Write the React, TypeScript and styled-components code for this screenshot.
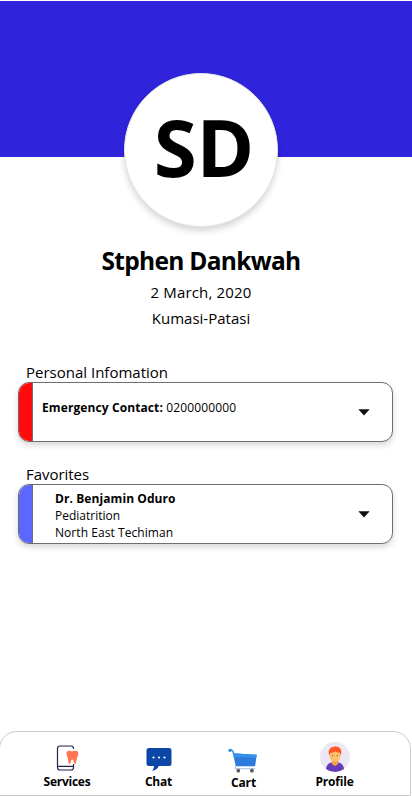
import React from "react";
import styled, { createGlobalStyle } from "styled-components";

const GlobalStyle = createGlobalStyle`
  * { box-sizing: border-box; }
  body {
    margin: 0;
    background: #fff;
    color: #000;
    font-family: "Open Sans", "Noto Sans", sans-serif;
    font-weight: 400;
    overflow: hidden;
  }
`;

const Screen = styled.div`
  width: 412px;
  height: 796px;
  display: flex;
  flex-direction: column;
  padding-top: 1px;
  overflow: hidden;
`;

const Banner = styled.header`
  height: 156px;
  flex: none;
  background: #2f24db;
  padding: 72px 0 0 124px;
`;

const Avatar = styled.div`
  width: 154px;
  height: 154px;
  border-radius: 50%;
  border: 1px solid #e6e6e6;
  background: #fff;
  box-shadow: 0 4px 6px rgba(0, 0, 0, 0.16);
  display: flex;
  justify-content: center;
  padding-left: 6px;
  font-size: 78px;
  font-weight: 700;
  line-height: 146px;
  letter-spacing: 0;
`;

const Identity = styled.section`
  width: 402px;
  margin-top: 86px;
  display: flex;
  flex-direction: column;
  align-items: center;
`;

const Name = styled.h1`
  margin: 0;
  font-size: 24.5px;
  line-height: 35px;
  padding-bottom: 1px;
  font-weight: 700;
  letter-spacing: -0.7px;
  white-space: nowrap;
`;

const Detail = styled.p<{ $spacing: number }>`
  margin: 0;
  font-size: 15px;
  line-height: 26px;
  letter-spacing: ${(p) => p.$spacing}px;
  white-space: nowrap;
`;

const Section = styled.section<{ $gap: number }>`
  margin: ${(p) => p.$gap}px 19px 0 18px;
`;

const SectionTitle = styled.h2<{ $spacing: number }>`
  margin: 0;
  padding-left: 8px;
  height: 20px;
  font-size: 15px;
  line-height: 20px;
  font-weight: 400;
  letter-spacing: ${(p) => p.$spacing}px;
`;

const Card = styled.div`
  height: 60px;
  display: flex;
  align-items: center;
  overflow: hidden;
  border: 1px solid #6e6e6e;
  border-radius: 11px;
  background: #fff;
  box-shadow: 0 3px 6px rgba(0, 0, 0, 0.16);
`;

const Stripe = styled.div<{ $color: string }>`
  width: 14px;
  align-self: stretch;
  flex: none;
  background: ${(p) => p.$color};
  border-right: 1px solid #707070;
`;

const CardBody = styled.div<{ $inset: number; $raise?: number; $drop?: number }>`
  flex: 1;
  padding: ${(p) => p.$drop ?? 0}px 0 ${(p) => p.$raise ?? 0}px ${(p) => p.$inset}px;
  font-size: 12px;
  line-height: 17px;
  white-space: nowrap;
`;

const Line = styled.div<{ $spacing?: number }>`
  letter-spacing: ${(p) => p.$spacing ?? 0}px;
`;

const Strong = styled.strong<{ $spacing: number }>`
  font-weight: 700;
  letter-spacing: ${(p) => p.$spacing}px;
`;

const Caret = styled.svg`
  width: 12px;
  height: 7px;
  flex: none;
  margin-right: 22px;
`;

const Nav = styled.nav`
  margin: auto 1px 0 -1px;
  height: 65px;
  flex: none;
  display: grid;
  grid-template-columns: 112px 71px 99px 83px;
  padding-left: 11px;
  border: 1px solid #cbcbcb;
  border-radius: 18px 18px 0 0;
`;

const NavItem = styled.a`
  display: flex;
  flex-direction: column;
  align-items: center;
  padding-top: 10px;
`;

const NavIcon = styled.svg`
  width: 32px;
  height: 32px;
  flex: none;
`;

const NavLabel = styled.span<{ $spacing: number }>`
  margin-top: -1px;
  font-size: 12px;
  line-height: 17px;
  font-weight: 700;
  letter-spacing: ${(p) => p.$spacing}px;
`;

const CartLabel = styled(NavLabel)`
  margin-top: 0;
`;

const DownCaret = () => (
  <Caret viewBox="0 0 12 7">
    <path d="M.3.300h11.400L6 6.600z" fill="#111" />
  </Caret>
);

const ServicesIcon = () => (
  <NavIcon viewBox="0 0 32 32">
    <path d="M22.500 7V6.500a2.500 2.500 0 0 0-2.500-2.500h-11a2.500 2.500 0 0 0-2.500 2.500v19a2.500 2.500 0 0 0 2.500 2.500h11a2.500 2.500 0 0 0 2.500-2.500V22M7 24.300h15.500" fill="none" stroke="#28234f" strokeWidth="1.200" />
    <path d="M15.500 11C15.900 8 19 8.700 21 9.400c2-.7 5.900-1.400 6.300 1.600.3 2.200-1 3.400-1.400 5.300-.5 2.300-.5 5.700-1.900 5.700s-.9-4.500-2.700-4.500-1.200 4.500-2.600 4.500-1.500-3.400-1.900-5.700c-.4-1.900-1.500-3.100-1.300-5.300z" fill="#ff7655" />
  </NavIcon>
);

const ChatIcon = () => (
  <NavIcon viewBox="0 0 32 32">
    <path d="M6 6h20a2.500 2.500 0 0 1 2.500 2.500v13A2.500 2.500 0 0 1 26 24H15.800c-1 2.600-3.400 4.500-6.800 4.700 1.300-1.200 2-2.800 2-4.700H6a2.500 2.500 0 0 1-2.500-2.500v-13A2.500 2.500 0 0 1 6 6z" fill="#0c47a8" />
    <circle cx="10.500" cy="15.500" r="1.100" fill="#fff" />
    <circle cx="16" cy="15.500" r="1.100" fill="#fff" />
    <circle cx="21.500" cy="15.500" r="1.100" fill="#fff" />
  </NavIcon>
);

const CartIcon = () => (
  <NavIcon viewBox="0.500 -1 32 32">
    <path d="M2.500 7.500h1.600c.8 0 1.200.4 1.400 1.100l3.500 14.600c-1.200.4-1.500 1.300-1.200 2.500h20" fill="none" stroke="#b7cfe4" strokeWidth="1.200" />
    <path d="M2.200 7.300H4c1 0 1.300.5 1.500 1.300l.5 1.800" fill="none" stroke="#3899e5" strokeWidth="1.600" />
    <circle cx="2.600" cy="7.300" r="1.600" fill="#1f8ad8" />
    <path d="M5.400 10.200l23.800 1.600-1.600 11.500H8.400z" fill="#2e79dc" />
    <path d="M5.400 10.200l23.800 1.600-.4 3L6.400 14z" fill="#3590e9" />
    <circle cx="10.800" cy="27.700" r="1.900" fill="#58585c" />
    <circle cx="24.400" cy="27.700" r="1.900" fill="#58585c" />
  </NavIcon>
);

const ProfileIcon = () => (
  <NavIcon viewBox="0 1 32 32">
    <circle cx="16" cy="16" r="15" fill="#ece6f5" />
    <path d="M7 28c.6-4.300 2.800-6 6-6.800h6c3.200.8 5.400 2.500 6 6.800a15 15 0 0 1-18 0z" fill="#673ab7" />
    <path d="M12.700 18h6.600v4c-1.200 3.500-5.400 3.500-6.600 0z" fill="#f2a348" />
    <ellipse cx="16" cy="14.600" rx="5.600" ry="6" fill="#ffc06d" />
    <path d="M10.300 14.500C8.500 9 11.200 6 16 5.600c4.800-.3 7.800 3.200 5.800 8.900l-1-2.900c-1.700.2-3-.2-4.200-1-1.300.9-3 1.300-5.100 1.100z" fill="#ff5722" />
    <circle cx="13.700" cy="14.600" r=".7" fill="#774722" />
    <circle cx="18.300" cy="14.600" r=".7" fill="#774722" />
  </NavIcon>
);

export default function App() {
  return (
    <>
      <GlobalStyle />
      <Screen>
        <Banner>
          <Avatar>SD</Avatar>
        </Banner>
        <Identity>
          <Name>Stphen Dankwah</Name>
          <Detail $spacing={0.15}>2 March, 2020</Detail>
          <Detail $spacing={0}>Kumasi-Patasi</Detail>
        </Identity>
        <Section $gap={31}>
          <SectionTitle $spacing={0}>Personal Infomation</SectionTitle>
          <Card>
            <Stripe $color="#ff0b0e" />
            <CardBody $inset={9} $raise={9}>
              <Line $spacing={0.15}>
                <Strong $spacing={0.1}>Emergency Contact:</Strong> 0200000000
              </Line>
            </CardBody>
            <DownCaret />
          </Card>
        </Section>
        <Section $gap={22}>
          <SectionTitle $spacing={-0.05}>Favorites</SectionTitle>
          <Card>
            <Stripe $color="#5b67ff" />
            <CardBody $inset={22} $drop={2}>
              <Line>
                <Strong $spacing={0.08}>Dr. Benjamin Oduro</Strong>
              </Line>
              <Line>Pediatrition</Line>
              <Line $spacing={0.06}>North East Techiman</Line>
            </CardBody>
            <DownCaret />
          </Card>
        </Section>
        <Nav>
          <NavItem>
            <ServicesIcon />
            <NavLabel $spacing={-0.25}>Services</NavLabel>
          </NavItem>
          <NavItem>
            <ChatIcon />
            <NavLabel $spacing={-0.2}>Chat</NavLabel>
          </NavItem>
          <NavItem>
            <CartIcon />
            <CartLabel $spacing={-0.1}>Cart</CartLabel>
          </NavItem>
          <NavItem>
            <ProfileIcon />
            <NavLabel $spacing={-0.2}>Profile</NavLabel>
          </NavItem>
        </Nav>
      </Screen>
    </>
  );
}
